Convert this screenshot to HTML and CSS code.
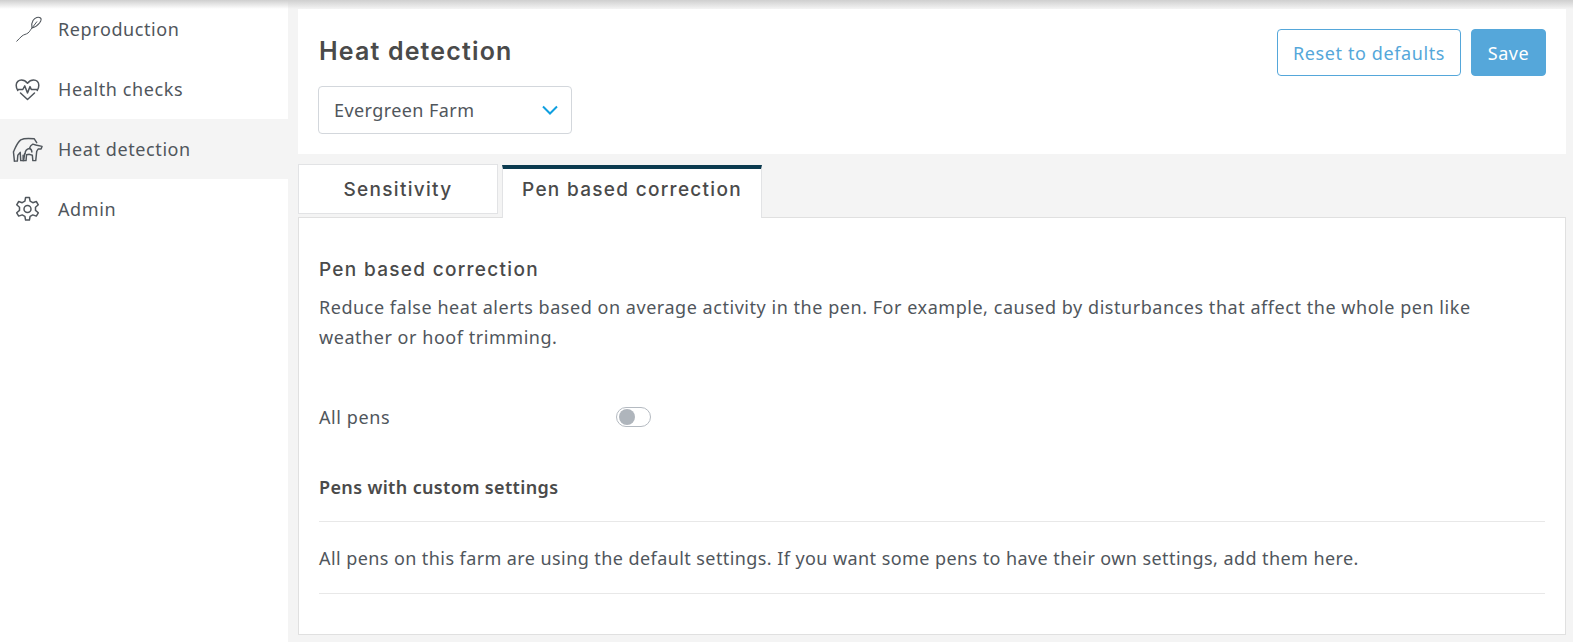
FILE: index.html
```html
<!DOCTYPE html>
<html lang="en">
<head>
  <meta charset="UTF-8" />
  <meta name="viewport" content="width=device-width, initial-scale=1" />
  <title>Heat detection</title>
  <link rel="stylesheet" href="styles.css">
</head>
<body>
  <div class="topbar-shadow"></div>
  <div class="app">
    <!-- Sidebar -->
    <nav class="sidebar">
      <a class="nav-item">
        <svg class="nav-icon" viewBox="0 0 31 30" fill="none" stroke="#50565c" stroke-width="1.1">
          <path d="M28.500 4c-2-1.700-5.500-.5-7.500 2.500-1.400 2.300-1.700 5-1 7.500 2.500-.5 5.500-2.500 7.500-5 1.500-2 2.300-3.800 1-5z"/>
          <path d="M25 7.500l-5 6.500c-1.500 1.500-2 3.500-4 5-2 1.500-4 1.300-6 3-2 1.700-3.500 3.500-5.500 5.500" stroke-width="1"/>
        </svg>
        <span>Reproduction</span>
      </a>
      <a class="nav-item">
        <svg class="nav-icon" viewBox="0 0 31 30" fill="none" stroke="#50565c" stroke-width="1.500" stroke-linejoin="round" stroke-linecap="round">
          <path d="M5.800 16.500C4.500 14.800 4.200 13 4.200 11.300c0-3.400 2.600-5.300 5.200-5.300 2.600 0 4.600 1.300 6.100 3.200C17 7.300 19 6 21.600 6c2.800 0 5.200 2 5.200 5.300 0 1.700-.3 3.500-1.600 5.200"/>
          <path d="M8.500 19l7 6.500 7-6.500"/>
          <path d="M5.800 15.500h5l2-3.600 2.700 7 2.500-6.300 1.300 2.900h5.900"/>
        </svg>
        <span>Health checks</span>
      </a>
      <a class="nav-item nav-item-active">
        <svg class="nav-icon" viewBox="0 0 32 30" fill="none" stroke="#50565c" stroke-width="1.500" stroke-linejoin="round" stroke-linecap="round">
          <path d="M2.500 27.500l-1-9.500c1.500-3 3.500-9.500 7.500-12.500 4-2 10-1.500 14-1l2.500 4"/>
          <path d="M2.500 27.500h3l.5-6 2.500-3 .5 8.500h3l1-7"/>
          <path d="M13.500 20c0-3 1.500-5 4.500-5.500 .5-2 1.500-3.500 3.500-4.500 l3 .8 6.500 1.500-1 2.700h-3l-1.500 2.500-1 9.500h-3l-.5-5.500-3-1-3 .5-.5 6h-3v-5.500"/>
          <path d="M18 14.500c1.500 .5 2.500 2 2.500 3.500"/>
        </svg>
        <span>Heat detection</span>
      </a>
      <a class="nav-item">
        <svg class="nav-icon" viewBox="0 0 31 30" fill="none" stroke="#50565c" stroke-width="1.500" stroke-linejoin="round">
          <path d="M13.600 3.500h3.800l.7 3.700 2.700 1.500 3.500-1.200 2 3.300-2.800 2.400v3.200l2.800 2.400-2 3.300-3.500-1.200-2.700 1.500-.7 3.700h-3.800l-.7-3.700-2.700-1.500-3.500 1.200-2-3.300 2.800-2.400v-3.200l-2.800-2.400 2-3.300 3.500 1.200 2.700-1.500z"/>
          <circle cx="15.500" cy="15" r="3.500"/>
        </svg>
        <span>Admin</span>
      </a>
    </nav>

    <main class="content">
      <!-- Page header -->
      <section class="page-head">
        <div class="head-left">
          <h1>Heat detection</h1>
          <div class="farm-select">
            <span>Evergreen Farm</span>
            <svg width="16" height="10" viewBox="0 0 16 10" fill="none" stroke="#0f9fe0" stroke-width="2"><path d="M1 1.500l7 7 7-7"/></svg>
          </div>
        </div>
        <div class="head-actions">
          <button class="btn btn-outline">Reset to defaults</button>
          <button class="btn btn-solid">Save</button>
        </div>
      </section>

      <!-- Tabs -->
      <div class="tabs">
        <div class="tab">Sensitivity</div>
        <div class="tab tab-active">Pen based correction</div>
      </div>

      <section class="panel">
        <h2>Pen based correction</h2>
        <p class="intro">Reduce false heat alerts based on average activity in the pen. For example, caused by disturbances that affect the whole pen like weather or hoof trimming.</p>
        <div class="toggle-row">
          <span class="toggle-label">All pens</span>
          <span class="toggle"><span class="toggle-knob"></span></span>
        </div>
        <h3>Pens with custom settings</h3>
        <p class="empty-note">All pens on this farm are using the default settings. If you want some pens to have their own settings, add them here.</p>
      </section>
    </main>
  </div>
</body>
</html>
```

FILE: styles.css
```css
* {
  box-sizing: border-box;
}

html, body {
  height: 100%;
}

body {
  margin: 0;
  font-family: "Noto Sans", "Open Sans", sans-serif;
  font-size: 18px;
  letter-spacing: 0.42px;
  color: #50565c;
  background: #f4f4f4;
  overflow: hidden;
  position: relative;
}

.topbar-shadow {
  position: absolute;
  top: 0; left: 0; right: 0;
  height: 9px;
  background: linear-gradient(to bottom, #cfcfcf, rgba(243, 243, 243, 0));
  z-index: 2;
}

.app {
  display: flex;
  height: 642px;
}

.sidebar {
  width: 288px;
  flex: none;
  background: white;
}

.nav-item {
  height: 60px;
  display: flex;
  align-items: center;
  gap: 15px;
  padding-left: 12px;
  letter-spacing: 0.6px;
  color: #50565c;
  position: relative;
  top: -1px;
}

.nav-item-active {
  background: #f4f4f4;
}

.nav-icon {
  width: 31px;
  height: 30px;
  flex: none;
}

.content {
  flex: 1;
  padding: 9px 7px 7px 10px;
  display: flex;
  flex-direction: column;
}

.page-head {
  height: 145px;
  background: white;
  display: flex;
  justify-content: space-between;
  padding: 20px 20px 0 20px;
}

h1 {
  margin: 8px 0 0 1px;
  font-family: Inter, sans-serif;
  font-size: 25px;
  font-weight: 600;
  letter-spacing: 1.15px;
  line-height: 28px;
  color: #4a4a4a;
}

.farm-select {
  margin-top: 21px;
  width: 254px;
  height: 48px;
  border: 1px solid #d3d7dc;
  border-radius: 4px;
  display: flex;
  align-items: center;
  justify-content: space-between;
  padding: 0 13px 0 15px;
}

.head-actions {
  display: flex;
  gap: 10px;
  align-items: flex-start;
}

.btn {
  height: 47px;
  border-radius: 4px;
  font-family: inherit;
  font-size: 18px;
  letter-spacing: 0.6px;
  border: 1px solid #55a7da;
}

.btn-outline {
  width: 184px;
  background: white;
  color: #55a7da;
}

.btn-solid {
  width: 75px;
  background: #55a7da;
  color: white;
}

.tabs {
  display: flex;
  gap: 4px;
  margin-top: 10px;
  height: 54px;
  position: relative;
  z-index: 1;
}

.tab {
  width: 200px;
  height: 50px;
  background: white;
  border: 1px solid #e2e3e5;
  font-family: Inter, sans-serif;
  font-weight: 500;
  font-size: 19px;
  letter-spacing: 1.3px;
  color: #4a4a4a;
  display: flex;
  align-items: center;
  justify-content: center;
}

.tab-active {
  width: 260px;
  height: 53px;
  margin-top: 1px;
  border-top: 4px solid #0b3a4f;
  border-bottom: none;
  padding-bottom: 9px;
}

.panel {
  flex: 1;
  margin-top: -1px;
  background: white;
  border: 1px solid #e0e0e0;
  padding: 0 20px;
}

h2 {
  margin: 40px 0 0;
  font-family: Inter, sans-serif;
  font-size: 19px;
  font-weight: 500;
  letter-spacing: 1.3px;
  line-height: 24px;
  color: #4a4a4a;
}

.intro {
  margin: 10px 0 0;
  max-width: 1190px;
  letter-spacing: 0.54px;
  line-height: 30px;
}

.toggle-row {
  display: flex;
  align-items: center;
  margin-top: 50px;
  height: 30px;
  letter-spacing: 0.6px;
}

.toggle-label {
  width: 297px;
}

.toggle {
  width: 35px;
  height: 20px;
  border: 1px solid #b4bac1;
  border-radius: 10px;
  display: flex;
  align-items: center;
  padding-left: 2px;
}

.toggle-knob {
  width: 16px;
  height: 16px;
  border-radius: 50%;
  background: #afb5bc;
}

h3 {
  margin: 43px 0 0;
  padding-bottom: 22px;
  font-size: 18px;
  font-weight: 600;
  letter-spacing: 0.35px;
  line-height: 24px;
  color: #4a4a4a;
  border-bottom: 1px solid #e8e8e8;
}

.empty-note {
  margin: 0;
  padding: 22px 0 21px;
  line-height: 28px;
  border-bottom: 1px solid #e8e8e8;
}
```
